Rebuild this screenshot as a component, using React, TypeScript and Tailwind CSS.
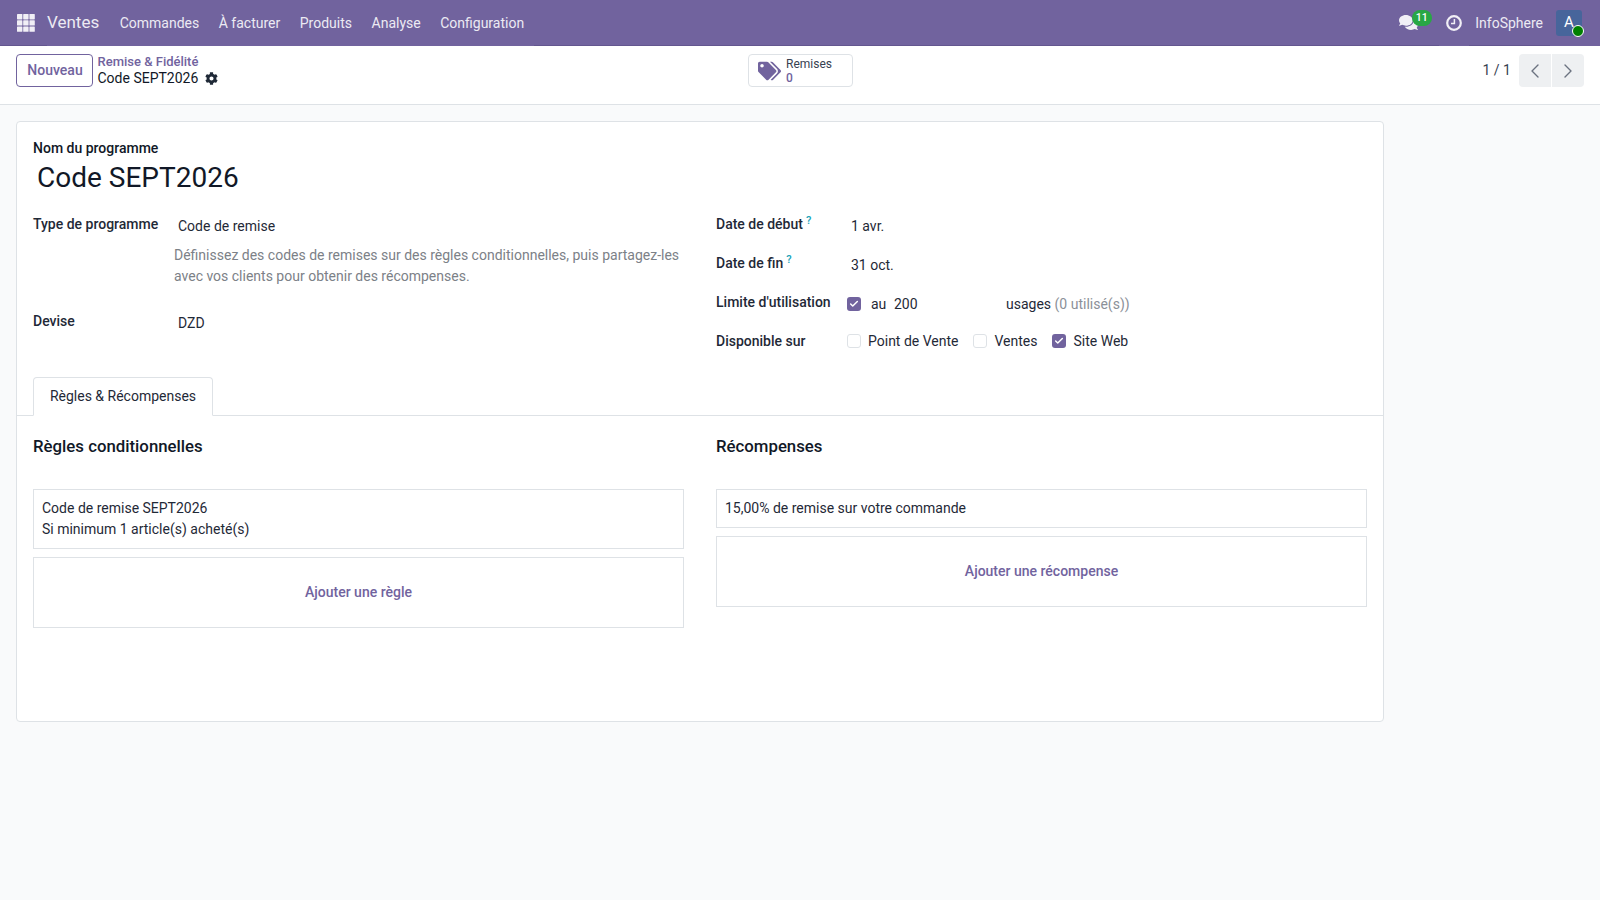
import { ChevronLeft, ChevronRight, Check } from 'lucide-react';
import { FaCog, FaComments, FaTags } from 'react-icons/fa';

const navItems = ['Commandes', 'À facturer', 'Produits', 'Analyse', 'Configuration'];

const Checkbox = ({ checked }: { checked?: boolean }) => (
  <span
    className={
      checked
        ? 'mb-px flex h-[14px] w-[14px] shrink-0 items-center justify-center rounded-[3px] bg-[#71639e]'
        : 'mb-px block h-[14px] w-[14px] shrink-0 rounded-[3px] border border-[#dee2e6] bg-white'
    }
  >
    {checked && <Check className="h-[10px] w-[10px] text-white" strokeWidth={3.5} />}
  </span>
);

const Help = () => <sup className="ml-[3px] text-[11px] font-medium text-[#17a2b8]">?</sup>;

const AppsIcon = () => (
  <svg width="18" height="18" viewBox="0 0 18 18" fill="#f1eff6">
    {[0, 6.2, 12.4].map((y) =>
      [0, 6.2, 12.4].map((x) => <rect key={`${x}-${y}`} x={x} y={y} width="5.4" height="5.4" rx="0.6" />)
    )}
  </svg>
);

const ClockIcon = () => (
  <svg width="16" height="16" viewBox="0 0 16 16" fill="none" stroke="#f1eff6">
    <circle cx="8" cy="8" r="6.8" strokeWidth="2.2" />
    <path d="M8.4 4v4.4H5" strokeWidth="1.5" />
  </svg>
);

export default function App() {
  return (
    <div className="flex h-[900px] flex-col overflow-hidden bg-[#f9fafb] font-['Roboto',sans-serif] text-[14px] text-[#374151]">
      {/* Navbar */}
      <header className="flex h-[46px] shrink-0 items-center justify-between border-b border-[#63568f] bg-[#71639e] text-[#eceaf3]">
        <div className="flex items-center">
          <span className="ml-[17px] mr-3">
            <AppsIcon />
          </span>
          <div className="-mb-px flex h-[46px] items-center border-b border-[#71639e] pr-[10px] pt-px">
            <span className="text-[17px]">Ventes</span>
            <nav className="ml-[20.5px] flex gap-[19.5px]">
              {navItems.map((item) => (
                <span key={item}>{item}</span>
              ))}
            </nav>
          </div>
        </div>
        <div className="flex items-center">
          <span className="relative mr-[7px] flex h-[26px] w-[33px] items-center">
            <FaComments className="h-[19px] w-[19px] text-[#f1eff6]" />
            <span className="absolute left-[13px] top-0 flex h-[16px] w-[20px] items-center justify-center rounded-full bg-[#28a745] text-[10.5px] font-medium text-white">
              11
            </span>
          </span>
          <div className="-mb-px flex h-[46px] items-center border-b border-[#71639e] px-[7px]">
            <ClockIcon />
          </div>
          <span className="ml-[6.5px] pt-px">InfoSphere</span>
          <div className="-mb-px ml-[7px] flex h-[46px] items-center border-b border-[#71639e] pl-[6px] pr-[18px]">
            <span className="relative flex h-[26px] w-[26px] items-center justify-center rounded-[3px] bg-[#47659b] text-[15px] text-white">
              A
              <span className="absolute -bottom-px -right-[2px] h-3 w-3 rounded-full border border-white bg-[#008000]" />
            </span>
          </div>
        </div>
      </header>

      {/* Control panel */}
      <div className="flex h-[59px] shrink-0 items-start border-b border-[#dee2e6] bg-white px-4 pt-2">
        <div className="flex w-[732px] shrink-0 items-center">
          <button className="h-[33px] w-[77px] rounded-[4px] border border-[#71639e] pl-px text-[14px] font-medium text-[#71639e]">
            Nouveau
          </button>
          <div className="ml-[4.5px] flex flex-col">
            <span className="text-[13px] font-medium leading-[16px] text-[#71639e]">Remise &amp; Fidélité</span>
            <span className="flex items-center gap-[7px] leading-[17px] text-[#111827]">
              Code SEPT2026 <FaCog className="h-[13px] w-[13px] text-[#1f2937]" />
            </span>
          </div>
        </div>
        <div className="flex h-[33px] w-[105px] items-center rounded-[4px] border border-[#dee2e6] pl-[9px]">
          <FaTags className="h-[20px] w-[23px] text-[#71639e]" />
          <div className="ml-[5px] flex flex-col text-[12px] leading-[14px]">
            <span className="text-[#374151]">Remises</span>
            <span className="font-medium text-[#71639e]">0</span>
          </div>
        </div>
        <div className="ml-auto flex items-center">
          <span className="mr-2 text-[#374151]">1 / 1</span>
          <span className="flex h-[33px] w-8 items-center justify-center rounded-l-[4px] bg-[#eef0f2]">
            <ChevronLeft className="h-6 w-6 text-[#6b7280]" strokeWidth={1.4} />
          </span>
          <span className="ml-px flex h-[33px] w-8 items-center justify-center rounded-r-[4px] bg-[#eef0f2]">
            <ChevronRight className="h-6 w-6 text-[#6b7280]" strokeWidth={1.4} />
          </span>
        </div>
      </div>

      {/* Form sheet */}
      <main className="px-4 pt-4">
        <div className="h-[601px] w-[1368px] rounded-[4px] border border-[#dee2e6] bg-white">
          <div className="px-4 pt-4">
            <label className="block text-[14px] font-medium leading-[21px] text-[#111827]">Nom du programme</label>
            <div className="ml-1 mt-px text-[28px] leading-[36px] text-[#111827]">Code SEPT2026</div>
          </div>

          <div className="mt-[18px] grid grid-cols-2 gap-x-8 px-4">
            {/* Left column */}
            <div>
              <div className="flex">
                <label className="w-[145px] font-medium leading-[21px] text-[#1f2937]">Type de programme</label>
                <div className="leading-[21px] text-[#1f2937]">
                  <div className="pt-[2px]">Code de remise</div>
                </div>
              </div>
              <p className="ml-[141px] mt-[8px] w-[510px] leading-[21px] text-[#7c8187]">
                Définissez des codes de remises sur des règles conditionnelles, puis partagez-les avec vos clients pour
                obtenir des récompenses.
              </p>
              <div className="mt-[24px] flex">
                <label className="w-[145px] font-medium leading-[21px] text-[#1f2937]">Devise</label>
                <div className="pt-[2px] leading-[21px] text-[#1f2937]">DZD</div>
              </div>
            </div>

            {/* Right column */}
            <div className="flex flex-col text-[#1f2937]">
              <div className="flex h-[39px] items-start">
                <label className="w-[135px] font-medium leading-[21px]">
                  Date de début
                  <Help />
                </label>
                <span className="pt-[2px] leading-[21px]">1 avr.</span>
              </div>
              <div className="flex h-[39px] items-start">
                <label className="w-[135px] font-medium leading-[21px]">
                  Date de fin
                  <Help />
                </label>
                <span className="pt-[2px] leading-[21px]">31 oct.</span>
              </div>
              <div className="flex h-[39px] items-start">
                <label className="w-[131px] font-medium leading-[21px]">Limite d'utilisation</label>
                <span className="flex items-center pt-[2px] leading-[21px]">
                  <Checkbox checked />
                  <span className="ml-[10px] w-[23px]">au</span>
                  <span className="w-[112px]">200</span>
                  <span>usages</span>
                  <span className="ml-[3.5px] text-[#8b9098]">(0 utilisé(s))</span>
                </span>
              </div>
              <div className="flex items-start">
                <label className="w-[131px] font-medium leading-[21px]">Disponible sur</label>
                <span className="flex items-center leading-[21px]">
                  <Checkbox />
                  <span className="ml-[7px]">Point de Vente</span>
                  <span className="ml-[15px]">
                    <Checkbox />
                  </span>
                  <span className="ml-[7px]">Ventes</span>
                  <span className="ml-[15px]">
                    <Checkbox checked />
                  </span>
                  <span className="ml-[7px]">Site Web</span>
                </span>
              </div>
            </div>
          </div>

          {/* Tabs */}
          <div className="mt-[25px] border-b border-[#dee2e6] px-4">
            <div className="-mb-px inline-flex h-[39px] w-[180px] items-center justify-center rounded-t-[4px] border border-b-white border-[#dee2e6] bg-white text-[#1f2937]">
              Règles &amp; Récompenses
            </div>
          </div>

          <div className="grid grid-cols-2 gap-x-8 px-4 pt-[19px]">
            <div>
              <h3 className="text-[16.8px] font-medium leading-[22px] text-[#111827]">Règles conditionnelles</h3>
              <div className="mt-[32px] border border-[#dee2e6] px-2 py-[8px] leading-[21px] text-[#1f2937]">
                <div>Code de remise SEPT2026</div>
                <div>Si minimum 1 article(s) acheté(s)</div>
              </div>
              <div className="mt-2 flex h-[71px] items-center justify-center border border-[#dee2e6] font-medium text-[#71639e]">
                Ajouter une règle
              </div>
            </div>
            <div>
              <h3 className="text-[16.8px] font-medium leading-[22px] text-[#111827]">Récompenses</h3>
              <div className="mt-[32px] border border-[#dee2e6] px-2 py-[8px] leading-[21px] text-[#1f2937]">
                15,00% de remise sur votre commande
              </div>
              <div className="mt-2 flex h-[71px] items-center justify-center border border-[#dee2e6] font-medium text-[#71639e]">
                Ajouter une récompense
              </div>
            </div>
          </div>
        </div>
      </main>
    </div>
  );
}
